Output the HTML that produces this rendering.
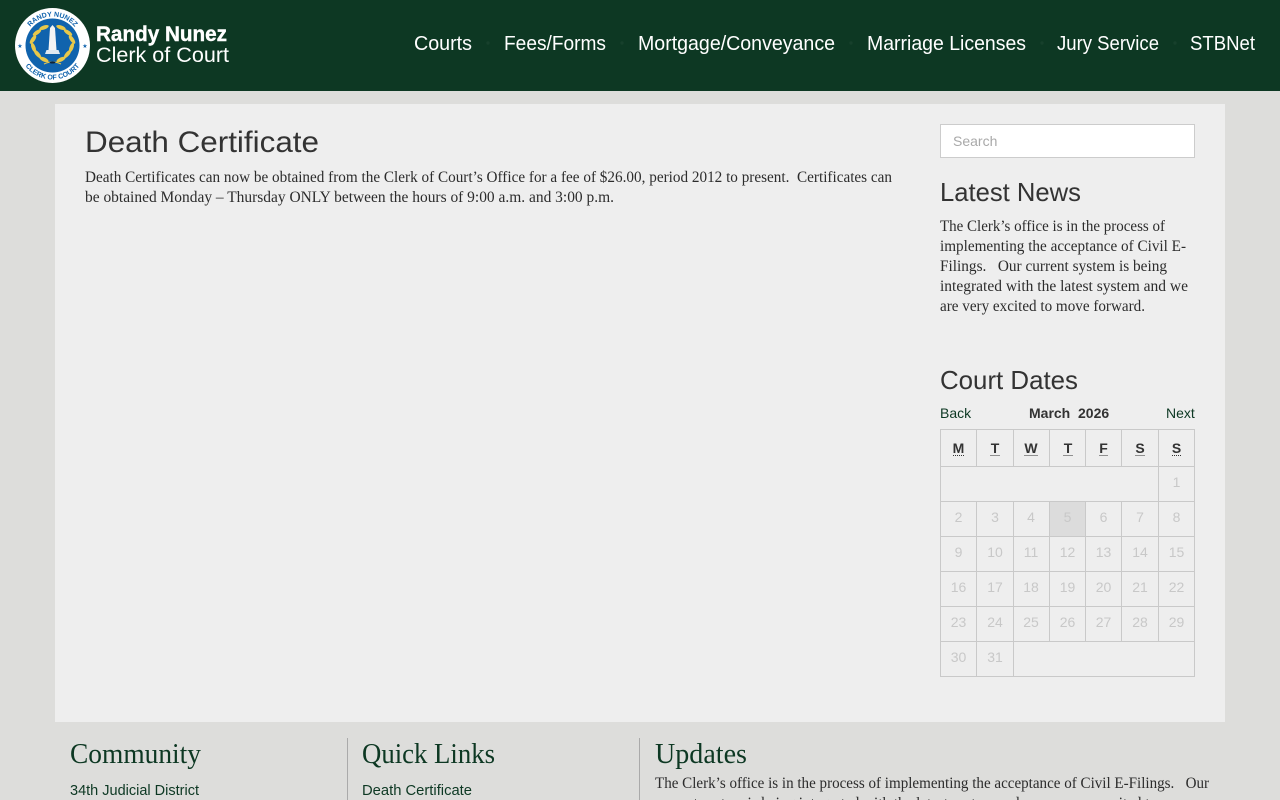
<!DOCTYPE html>
<html lang="en"><head><meta charset="utf-8"><title>Death Certificate</title>
<style>
html,body{margin:0;padding:0;width:1280px;height:800px;overflow:hidden;background:#dddddb}
svg{display:block;position:absolute;left:0;top:0}
.os{font-family:"Liberation Sans",sans-serif}
.nav{font-size:20.5px;fill:#fff}
.h{font-size:26px;fill:#333}
.s{font-family:"Liberation Serif",serif;font-size:16px;fill:#2c2c2c}
.fh{font-family:"Liberation Serif",serif;font-size:28px;fill:#0d3823}
.fl{font-size:14.5px;fill:#0d3823}
.a{font-family:"Liberation Sans",sans-serif;font-size:14px}
.d{font-family:"Liberation Sans",sans-serif;font-size:14px;fill:#c8c8c8;text-anchor:middle}
.w{font-family:"Liberation Sans",sans-serif;font-size:14px;font-weight:700;fill:#333;text-anchor:middle}
.g{stroke:#c9c9c9;stroke-width:1}
.u{stroke:#333;stroke-width:1;stroke-dasharray:1 1}
</style></head><body>
<svg width="1280" height="800" viewBox="0 0 1280 800" xmlns="http://www.w3.org/2000/svg">
<rect width="1280" height="800" fill="#dddddb"/>
<rect width="1280" height="91" fill="#0d3823"/>
<rect x="55" y="104" width="1170" height="618" fill="#eeeeee"/>

<!-- logo -->
<circle cx="52.5" cy="45.5" r="37.5" fill="#fff"/>
<circle cx="52.5" cy="45.5" r="27" fill="#1063ad"/>
<defs>
<path id="top" d="M23.5 45.5A29 29 0 0 1 81.5 45.5"/>
<path id="bot" d="M18.5 45.5A34 34 0 0 0 86.5 45.5"/>
</defs>
<text font-family="Liberation Sans,sans-serif" font-size="7" font-weight="700" fill="#1063ad" text-anchor="middle"><textPath href="#top" startOffset="50%">RANDY NUNEZ</textPath></text>
<text font-family="Liberation Sans,sans-serif" font-size="7" font-weight="700" fill="#1063ad" text-anchor="middle"><textPath href="#bot" startOffset="50%">CLERK OF COURT</textPath></text>
<text x="20" y="48" font-family="DejaVu Sans,sans-serif" font-size="6" fill="#1063ad" text-anchor="middle">★</text>
<text x="85" y="48" font-family="DejaVu Sans,sans-serif" font-size="6" fill="#1063ad" text-anchor="middle">★</text>
<g fill="#e8c84a">
<ellipse cx="44" cy="27.5" rx="5" ry="2" transform="rotate(-20 44 27.5)"/>
<ellipse cx="37" cy="32.5" rx="5" ry="2" transform="rotate(-35 37 32.5)"/>
<ellipse cx="33" cy="39.5" rx="5" ry="2" transform="rotate(-55 33 39.5)"/>
<ellipse cx="33.5" cy="47.5" rx="5" ry="2" transform="rotate(70 33.5 47.5)"/>
<ellipse cx="37.5" cy="54" rx="5" ry="2" transform="rotate(50 37.5 54)"/>
<ellipse cx="44" cy="59.5" rx="5" ry="2" transform="rotate(25 44 59.5)"/>
<ellipse cx="61" cy="27.5" rx="5" ry="2" transform="rotate(20 61 27.5)"/>
<ellipse cx="68" cy="32.5" rx="5" ry="2" transform="rotate(35 68 32.5)"/>
<ellipse cx="72" cy="39.5" rx="5" ry="2" transform="rotate(55 72 39.5)"/>
<ellipse cx="71.5" cy="47.5" rx="5" ry="2" transform="rotate(-70 71.5 47.5)"/>
<ellipse cx="67.5" cy="54" rx="5" ry="2" transform="rotate(-50 67.5 54)"/>
<ellipse cx="61" cy="59.5" rx="5" ry="2" transform="rotate(-25 61 59.5)"/>
</g>
<path d="M50 28L52.5 25L55 28L56.5 50H48.5Z" fill="#f4f4f4"/>
<path d="M46.5 50H58.5L60 54H45Z" fill="#dfe8f0"/>
<path d="M44 64Q52.5 60 61 64" fill="none" stroke="#e8c84a" stroke-width="1"/>
<ellipse cx="52.5" cy="62.5" rx="3" ry="1" fill="#123"/>

<text x="96" y="41" font-family="Liberation Sans,sans-serif" font-weight="700" font-size="21" fill="#fff" stroke="#fff" stroke-width=".4" textLength="131" lengthAdjust="spacingAndGlyphs">Randy Nunez</text>
<text x="96" y="62" font-family="Liberation Sans,sans-serif" font-size="21.5" fill="#fff" textLength="133" lengthAdjust="spacingAndGlyphs">Clerk of Court</text>

<!-- nav -->
<g class="os nav">
<text x="414" y="50" textLength="58" lengthAdjust="spacingAndGlyphs">Courts</text>
<text x="504" y="50" textLength="102" lengthAdjust="spacingAndGlyphs">Fees/Forms</text>
<text x="638" y="50" textLength="197" lengthAdjust="spacingAndGlyphs">Mortgage/Conveyance</text>
<text x="867" y="50" textLength="159" lengthAdjust="spacingAndGlyphs">Marriage Licenses</text>
<text x="1057" y="50" textLength="102" lengthAdjust="spacingAndGlyphs">Jury Service</text>
<text x="1190" y="50" textLength="65" lengthAdjust="spacingAndGlyphs">STBNet</text>
</g>
<g fill="#17402c">
<circle cx="488" cy="43" r="1.7"/><circle cx="622" cy="43" r="1.7"/><circle cx="851" cy="43" r="1.7"/><circle cx="1042" cy="43" r="1.7"/><circle cx="1175" cy="43" r="1.7"/>
</g>

<!-- main -->
<text class="os" x="85" y="152" font-size="30" fill="#333" textLength="234" lengthAdjust="spacingAndGlyphs">Death Certificate</text>
<text class="s" x="85" y="182" xml:space="preserve" textLength="807" lengthAdjust="spacingAndGlyphs">Death Certificates can now be obtained from the Clerk of Court’s Office for a fee of $26.00, period 2012 to present.  Certificates can</text>
<text class="s" x="85" y="202" textLength="529" lengthAdjust="spacingAndGlyphs">be obtained Monday – Thursday ONLY between the hours of 9:00 a.m. and 3:00 p.m.</text>

<!-- sidebar -->
<rect x="940.5" y="124.5" width="254" height="33" fill="#fff" stroke="#ccc"/>
<text class="a" x="953" y="146" fill="#a9a9a9">Search</text>
<text class="os h" x="940" y="201" textLength="141" lengthAdjust="spacingAndGlyphs">Latest News</text>
<text class="s" x="940" y="231" textLength="225" lengthAdjust="spacingAndGlyphs">The Clerk’s office is in the process of</text>
<text class="s" x="940" y="251" textLength="246" lengthAdjust="spacingAndGlyphs">implementing the acceptance of Civil E-</text>
<text class="s" x="940" y="271" xml:space="preserve" textLength="227" lengthAdjust="spacingAndGlyphs">Filings.   Our current system is being</text>
<text class="s" x="940" y="291" textLength="248" lengthAdjust="spacingAndGlyphs">integrated with the latest system and we</text>
<text class="s" x="940" y="311" textLength="205" lengthAdjust="spacingAndGlyphs">are very excited to move forward.</text>
<text class="os h" x="940" y="389" textLength="138" lengthAdjust="spacingAndGlyphs">Court Dates</text>

<!-- calendar -->
<text class="a" x="940" y="418" fill="#0d3823">Back</text>
<text class="a" x="1029" y="418" font-weight="700" fill="#333" xml:space="preserve">March  2026</text>
<text class="a" x="1166" y="418" fill="#0d3823">Next</text>
<rect x="1050" y="502" width="35" height="34" fill="#dcdcdc"/>
<g class="g" fill="none">
<rect x="940.5" y="429.5" width="254" height="247"/>
<path d="M941 466.5H1194M941 501.5H1194M941 536.5H1194M941 571.5H1194M941 606.5H1194M941 641.5H1194"/>
<path d="M976.5 430V466M1013.5 430V466M976.5 502V676M1013.5 502V676"/>
<path d="M1049.5 430V466M1085.5 430V466M1121.5 430V466M1158.5 430V501"/>
<path d="M1049.5 502V641M1085.5 502V641M1121.5 502V641M1158.5 502V641"/>
</g>
<text class="w" x="958.5" y="453">M</text><text class="w" x="995" y="453">T</text><text class="w" x="1031" y="453">W</text><text class="w" x="1068" y="453">T</text><text class="w" x="1103.5" y="453">F</text><text class="w" x="1140" y="453">S</text><text class="w" x="1176.5" y="453">S</text>
<path class="u" d="M953 455.5H965M990.5 455.5H999.5M1024.5 455.5H1038M1063.5 455.5H1072.5M1099.5 455.5H1108M1135.5 455.5H1144.5M1172 455.5H1181"/>
<g>
<text class="d" x="1176.5" y="487">1</text>
<text class="d" x="958.5" y="522">2</text><text class="d" x="995" y="522">3</text><text class="d" x="1031" y="522">4</text><text class="d" x="1067.5" y="522">5</text><text class="d" x="1103.5" y="522">6</text><text class="d" x="1140" y="522">7</text><text class="d" x="1176.5" y="522">8</text>
<text class="d" x="958.5" y="557">9</text><text class="d" x="995" y="557">10</text><text class="d" x="1031" y="557">11</text><text class="d" x="1067.5" y="557">12</text><text class="d" x="1103.5" y="557">13</text><text class="d" x="1140" y="557">14</text><text class="d" x="1176.5" y="557">15</text>
<text class="d" x="958.5" y="592">16</text><text class="d" x="995" y="592">17</text><text class="d" x="1031" y="592">18</text><text class="d" x="1067.5" y="592">19</text><text class="d" x="1103.5" y="592">20</text><text class="d" x="1140" y="592">21</text><text class="d" x="1176.5" y="592">22</text>
<text class="d" x="958.5" y="627">23</text><text class="d" x="995" y="627">24</text><text class="d" x="1031" y="627">25</text><text class="d" x="1067.5" y="627">26</text><text class="d" x="1103.5" y="627">27</text><text class="d" x="1140" y="627">28</text><text class="d" x="1176.5" y="627">29</text>
<text class="d" x="958.5" y="662">30</text><text class="d" x="995" y="662">31</text>
</g>

<!-- footer -->
<path d="M347.5 738V800M639.5 738V800" stroke="#aaa" stroke-width="1"/>
<text class="fh" x="70" y="763" textLength="131" lengthAdjust="spacingAndGlyphs">Community</text>
<text class="fh" x="362" y="763" textLength="133" lengthAdjust="spacingAndGlyphs">Quick Links</text>
<text class="fh" x="655" y="763" textLength="92" lengthAdjust="spacingAndGlyphs">Updates</text>
<text class="os fl" x="70" y="795" textLength="129" lengthAdjust="spacingAndGlyphs">34th Judicial District</text>
<text class="os fl" x="362" y="795" textLength="110" lengthAdjust="spacingAndGlyphs">Death Certificate</text>
<text class="s" x="655" y="788" xml:space="preserve" textLength="554" lengthAdjust="spacingAndGlyphs">The Clerk’s office is in the process of implementing the acceptance of Civil E-Filings.   Our</text>
<text class="s" x="655" y="808" textLength="502" lengthAdjust="spacingAndGlyphs">current system is being integrated with the latest system and we are very excited to</text>
</svg>
</body></html>
